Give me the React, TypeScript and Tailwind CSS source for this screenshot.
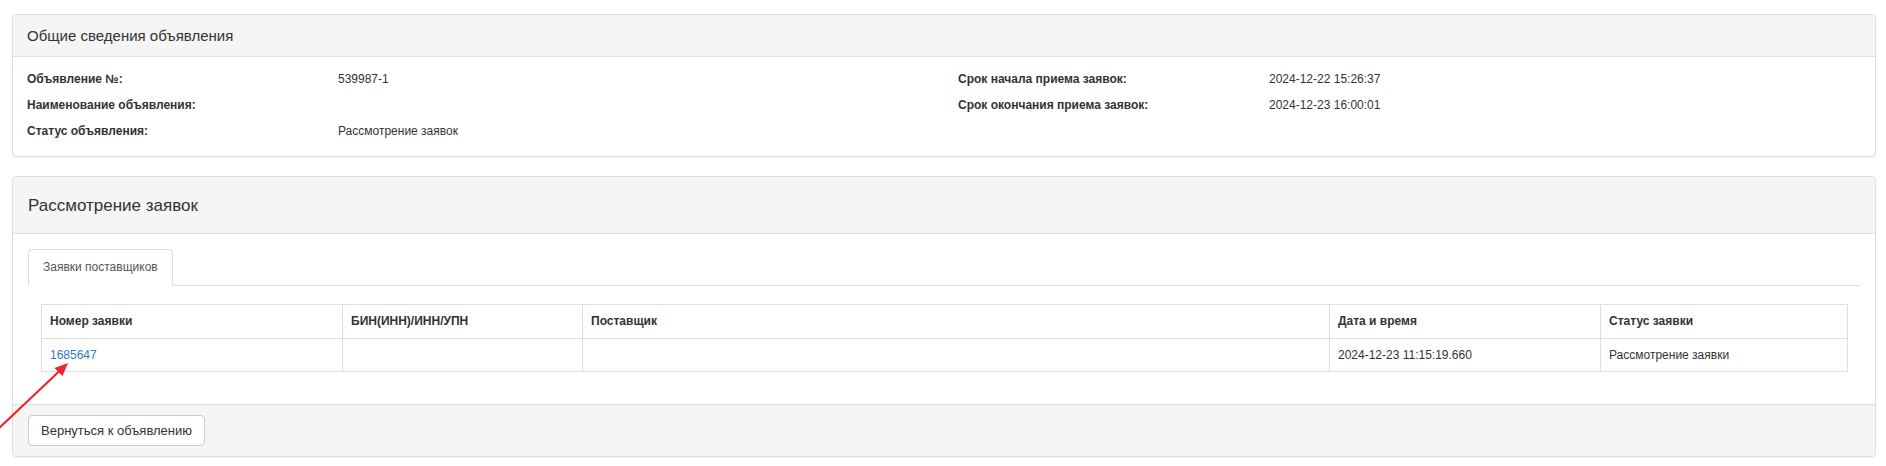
import React from 'react';

const INFO_LEFT = [
  { label: 'Объявление №:', value: '539987-1' },
  { label: 'Наименование объявления:', value: '' },
  { label: 'Статус объявления:', value: 'Рассмотрение заявок' },
];

const INFO_RIGHT = [
  { label: 'Срок начала приема заявок:', value: '2024-12-22 15:26:37' },
  { label: 'Срок окончания приема заявок:', value: '2024-12-23 16:00:01' },
];

const COLUMNS = [
  { key: 'num', label: 'Номер заявки', width: 'w-[301px]' },
  { key: 'bin', label: 'БИН(ИНН)/ИНН/УПН', width: 'w-[240px]' },
  { key: 'supplier', label: 'Поставщик', width: 'w-[747px]' },
  { key: 'date', label: 'Дата и время', width: 'w-[271px]' },
  { key: 'status', label: 'Статус заявки', width: 'w-[247px]' },
];

function InfoColumn({ rows }: { rows: { label: string; value: string }[] }) {
  return (
    <div>
      {rows.map((row) => (
        <div key={row.label} className="grid h-[26px] grid-cols-[311px_1fr] items-center pl-[14px]">
          <span className="font-bold">{row.label}</span>
          <span>{row.value}</span>
        </div>
      ))}
    </div>
  );
}

export default function App() {
  return (
    <div
      className="relative min-h-[466px] bg-white pl-[12px] pr-[10px] pt-[14px] text-[12px] leading-[17px] text-[#333]"
      style={{ fontFamily: '"Liberation Sans", Arial, sans-serif' }}
    >
      {/* Общие сведения */}
      <div className="rounded-[4px] border border-[#ddd] shadow-[0_1px_1px_rgba(0,0,0,0.05)]">
        <div className="flex h-[42px] items-center rounded-t-[4px] border-b border-[#ddd] bg-[#f5f5f5] px-[14px] text-[15px]">
          Общие сведения объявления
        </div>
        <div className="grid grid-cols-2 pb-[12px] pt-[9px]">
          <InfoColumn rows={INFO_LEFT} />
          <InfoColumn rows={INFO_RIGHT} />
        </div>
      </div>

      {/* Рассмотрение заявок */}
      <div className="mt-[19px] rounded-[4px] border border-[#ddd] shadow-[0_1px_1px_rgba(0,0,0,0.05)]">
        <div className="flex h-[57px] items-center rounded-t-[4px] border-b border-[#ddd] bg-[#f5f5f5] px-[15px] text-[17px]">
          Рассмотрение заявок
        </div>
        <div className="px-[15px] pb-[32px] pt-[15px]">
          <div className="flex border-b border-[#ddd]">
            <div className="-mb-px flex h-[37px] items-center rounded-t-[4px] border border-[#ddd] border-b-white bg-white px-[14px] text-[#555]">
              Заявки поставщиков
            </div>
          </div>
          <div className="px-[13px] pt-[18px]">
            <table className="w-full table-fixed border-collapse border border-[#ddd]">
              <thead>
                <tr>
                  {COLUMNS.map((col) => (
                    <th
                      key={col.key}
                      className={`${col.width} h-[34px] border border-[#ddd] px-[8px] text-left font-bold`}
                    >
                      {col.label}
                    </th>
                  ))}
                </tr>
              </thead>
              <tbody>
                <tr>
                  <td className="h-[33px] border border-[#ddd] px-[8px]">
                    <a href="#" className="text-[#337ab7]">1685647</a>
                  </td>
                  <td className="border border-[#ddd] px-[8px]"></td>
                  <td className="border border-[#ddd] px-[8px]"></td>
                  <td className="border border-[#ddd] px-[8px]">2024-12-23 11:15:19.660</td>
                  <td className="border border-[#ddd] px-[8px]">Рассмотрение заявки</td>
                </tr>
              </tbody>
            </table>
          </div>
        </div>
        <div className="rounded-b-[4px] border-t border-[#ddd] bg-[#f5f5f5] px-[15px] py-[10px]">
          <button className="h-[31px] rounded-[4px] border border-[#ccc] bg-white px-[12px] text-[13px] text-[#333]">
            Вернуться к объявлению
          </button>
        </div>
      </div>

      {/* annotation arrow */}
      <svg
        className="pointer-events-none absolute left-0 top-[350px]"
        width="90"
        height="90"
        viewBox="0 0 90 90"
      >
        <line x1="-4" y1="81" x2="60" y2="20.5" stroke="#e8282b" strokeWidth="2.2" />
        <polygon points="68,13 62.5,26 54.5,18" fill="#e8282b" />
      </svg>
    </div>
  );
}
